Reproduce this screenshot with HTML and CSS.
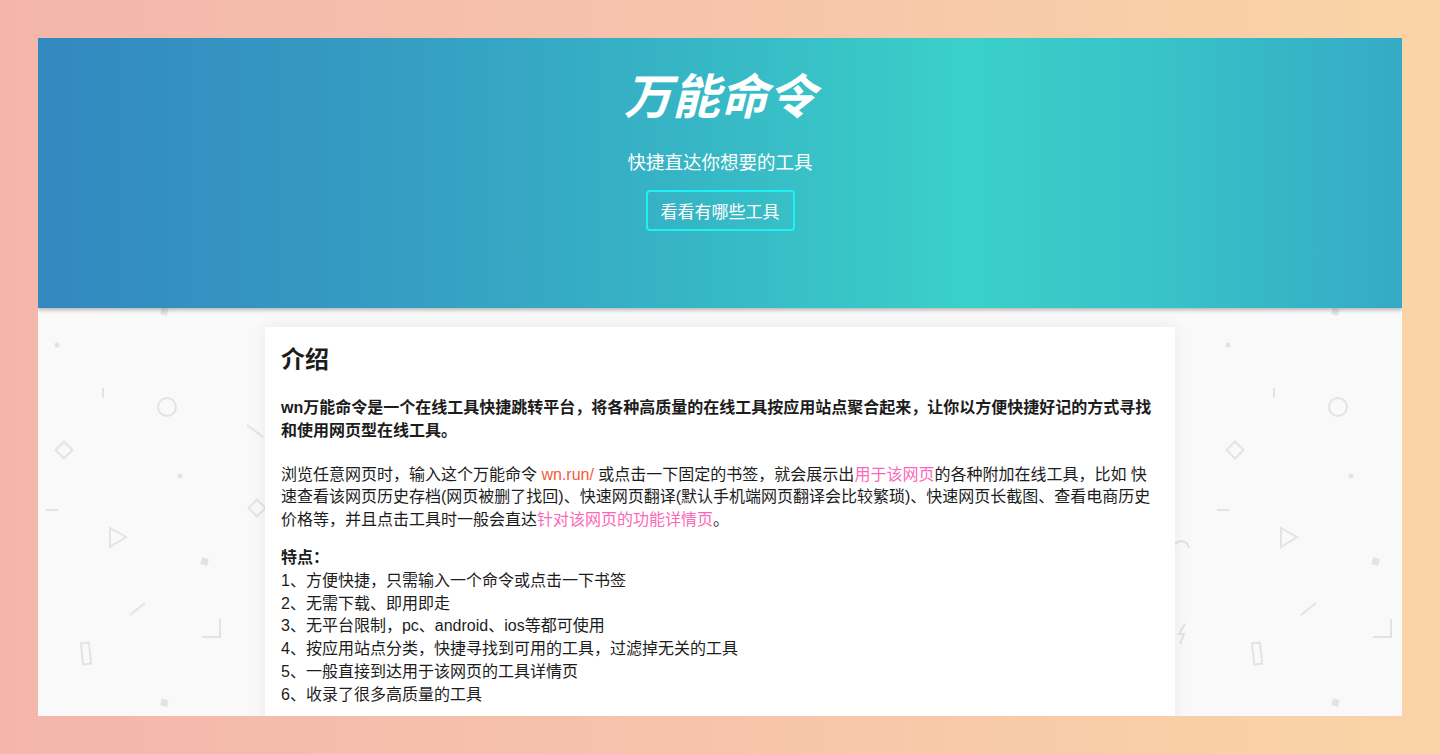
FILE: index.html
```html
<!DOCTYPE html>
<html lang="zh-CN">
<head>
<meta charset="utf-8">
<title>万能命令</title>
<link rel="stylesheet" href="styles.css">
</head>
<body>
<div class="window">
  <header class="hero">
    <h1 class="hero-title">万能命令</h1>
    <p class="hero-sub">快捷直达你想要的工具</p>
    <a class="hero-btn" href="#tools">看看有哪些工具</a>
  </header>
  <main class="main">
    <svg class="deco" width="1364" height="408" viewBox="0 0 1364 408" aria-hidden="true">
      <defs>
        <g id="pat" fill="none" stroke="#e3e3e3" stroke-width="2">
          <circle cx="19" cy="37" r="2.5" fill="#e3e3e3" stroke="none"/>
          <line x1="65" y1="80" x2="65" y2="90"/>
          <circle cx="129" cy="99" r="9"/>
          <line x1="209" y1="117" x2="225" y2="129"/>
          <rect x="20" y="136" width="12" height="12" transform="rotate(45 26 142)"/>
          <circle cx="142" cy="168" r="2.5" fill="#e3e3e3" stroke="none"/>
          <line x1="8" y1="202" x2="20" y2="202"/>
          <polygon points="72,220 88,229 72,239"/>
          <rect x="163" y="250" width="7" height="7" fill="#e3e3e3" stroke="none" transform="rotate(15 166 254)"/>
          <line x1="92" y1="307" x2="107" y2="295"/>
          <polyline points="164,329 182,329 182,311"/>
          <rect x="44" y="335" width="8" height="21" transform="rotate(-6 48 345)"/>
          <rect x="123" y="391" width="7" height="7" fill="#e3e3e3" stroke="none" transform="rotate(15 126 394)"/>
          <rect x="123" y="0" width="7" height="7" fill="#e3e3e3" stroke="none" transform="rotate(15 126 3)"/>
        </g>
      </defs>
      <use href="#pat"/>
      <use href="#pat" transform="translate(1171 0)"/>
      <g fill="none" stroke="#e3e3e3" stroke-width="2">
        <rect x="213" y="194" width="12" height="12" transform="rotate(45 219 200)"/>
        <path d="M1137 236 A8 8 0 0 1 1151 240"/>
        <path d="M1147 316 L1141 326 L1146 326 L1142 336"/>
      </g>
    </svg>
    <article class="card">
      <h2 class="card-title">介绍</h2>
      <p class="lead">wn万能命令是一个在线工具快捷跳转平台，将各种高质量的在线工具按应用站点聚合起来，让你以方便快捷好记的方式寻找和使用网页型在线工具。</p>
      <p class="desc">浏览任意网页时，输入这个万能命令 <span class="cmd">wn.run/</span> 或点击一下固定的书签，就会展示出<span class="hl">用于该网页</span>的各种附加在线工具，比如 快速查看该网页历史存档(网页被删了找回)、快速网页翻译(默认手机端网页翻译会比较繁琐)、快速网页长截图、查看电商历史价格等，并且点击工具时一般会直达<span class="hl">针对该网页的功能详情页</span>。</p>
      <div class="features">
        <div class="features-title">特点：</div>
        <div>1、方便快捷，只需输入一个命令或点击一下书签</div>
        <div>2、无需下载、即用即走</div>
        <div>3、无平台限制，pc、android、ios等都可使用</div>
        <div>4、按应用站点分类，快捷寻找到可用的工具，过滤掉无关的工具</div>
        <div>5、一般直接到达用于该网页的工具详情页</div>
        <div>6、收录了很多高质量的工具</div>
      </div>
    </article>
  </main>
</div>
</body>
</html>
```
FILE: styles.css
```css
* { box-sizing: border-box; }
html, body { margin: 0; padding: 0; }
body {
  width: 1440px;
  height: 754px;
  overflow: hidden;
  padding: 38px;
  background: linear-gradient(90deg, #f4b6ab 0%, #f6c3ab 45%, #fad4a6 100%);
  font-family: "Liberation Sans", "Noto Sans CJK SC", sans-serif;
  color: #1c1c1c;
}
.window {
  width: 1364px;
  height: 678px;
  overflow: hidden;
  display: flex;
  flex-direction: column;
  background: #f9f9f9;
}
.hero {
  position: relative;
  z-index: 2;
  height: 270px;
  flex: none;
  display: flex;
  flex-direction: column;
  align-items: center;
  padding-top: 26px;
  background: linear-gradient(90deg, #3388c0 0%, #3599c2 22%, #36b2c5 45%, #3ad0c9 68%, #38c3c8 82%, #35aac6 100%);
  box-shadow: 0 2px 4px rgba(0,0,0,0.28);
  color: #fff;
}
.hero-title {
  margin: 0;
  font-family: "Noto Sans CJK SC", sans-serif;
  font-size: 48px;
  line-height: 58px;
  font-weight: 700;
  font-style: italic;
  letter-spacing: 0;
}
.hero-sub {
  margin: 26px 0 0;
  font-family: "Noto Sans CJK SC", sans-serif;
  font-size: 18.5px;
  line-height: 26px;
}
.hero-btn {
  margin-top: 16px;
  display: block;
  padding: 7px 13px 6px;
  border: 2px solid #1ff0f4;
  border-radius: 4px;
  color: #fff;
  text-decoration: none;
  font-family: "Noto Sans CJK SC", sans-serif;
  font-size: 17px;
  line-height: 24px;
}
.main {
  position: relative;
  flex: 1;
  padding-top: 19px;
  background: #f9f9f9;
}
.deco {
  position: absolute;
  left: 0;
  top: 0;
  z-index: 0;
}
.card {
  position: relative;
  z-index: 1;
  width: 910px;
  margin: 0 auto;
  min-height: 420px;
  padding: 14px 16px 16px;
  background: #fff;
  box-shadow: 0 0 14px rgba(0,0,0,0.07);
  font-size: 16px;
  line-height: 22.8px;
}
.card-title {
  margin: 0;
  font-family: "Noto Sans CJK SC", sans-serif;
  font-size: 24px;
  line-height: 34px;
  font-weight: 700;
}
.lead {
  margin: 22px 0 0;
  font-weight: 700;
}
.desc {
  margin: 21px 0 0;
}
.cmd { color: #f25a3c; }
.hl { color: #fb68b9; }
.features {
  margin-top: 15px;
}
.features-title { font-weight: 700; }
```
